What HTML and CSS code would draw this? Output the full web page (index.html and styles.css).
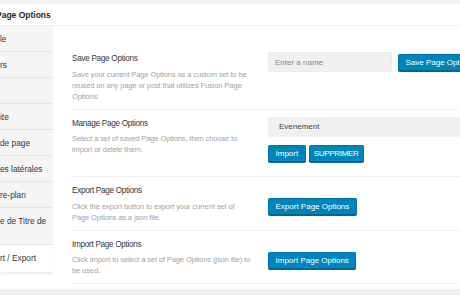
FILE: index.html
```html
<!DOCTYPE html>
<html lang="fr">
<head>
    <meta charset="UTF-8">
    <title>Page Options</title>
    <link rel="stylesheet" href="styles.css">
</head>
<body>

    <div class="postbox">
        <div class="postbox-head">
            <h2>Page Options</h2>
        </div>

        <div class="postbox-inside">
            <ul class="tabs">
                <li class="tab">le</li>
                <li class="tab">rs</li>
                <li class="tab"></li>
                <li class="tab">ite</li>
                <li class="tab">de page</li>
                <li class="tab">es latérales</li>
                <li class="tab">re-plan</li>
                <li class="tab tab-tall">e de Titre de</li>
                <li class="tab tab-active">rt / Export</li>
            </ul>

            <div class="options">
                <div class="option">
                    <div class="option-label">
                        <h3>Save Page Options</h3>
                        <p>Save your current Page Options as a custom set to be reused on any page or post that utilizes Fusion Page Options.</p>
                    </div>
                    <div class="option-field field-inline">
                        <input type="text" class="text-input" placeholder="Enter a name">
                        <button class="btn">Save Page Options</button>
                    </div>
                </div>

                <div class="option">
                    <div class="option-label">
                        <h3>Manage Page Options</h3>
                        <p>Select a set of saved Page Options, then choose to import or delete them.</p>
                    </div>
                    <div class="option-field">
                        <select class="select-input">
                            <option>Evenement</option>
                        </select>
                        <div class="btn-group">
                            <button class="btn">Import</button>
                            <button class="btn btn-caps">SUPPRIMER</button>
                        </div>
                    </div>
                </div>

                <div class="option">
                    <div class="option-label">
                        <h3>Export Page Options</h3>
                        <p>Click the export button to export your current set of Page Options as a json file.</p>
                    </div>
                    <div class="option-field field-center">
                        <button class="btn">Export Page Options</button>
                    </div>
                </div>

                <div class="option">
                    <div class="option-label">
                        <h3>Import Page Options</h3>
                        <p>Click Import to select a set of Page Options (json file) to be used.</p>
                    </div>
                    <div class="option-field field-center">
                        <button class="btn">Import Page Options</button>
                    </div>
                </div>
            </div>
        </div>
    </div>

</body>
</html>
```

FILE: styles.css
```css
body {
    margin: 0;
    padding-top: 4px;
    background-color: #f1f1f1;
    color: #23282d;
    font-family: 'Liberation Sans', Arial, sans-serif;
    overflow: hidden;
}

.postbox {
    background-color: #fff;
}

.postbox-head {
    height: 21px;
    border-bottom: 1px solid #eee;
}

.postbox-head h2 {
    margin: 0 0 0 -4px;
    font-size: 8.5px;
    font-weight: bold;
    line-height: 22px;
    color: #23282d;
}

.postbox-inside {
    display: flex;
    align-items: flex-start;
}

.tabs {
    list-style: none;
    margin: 0;
    padding: 0;
    width: 53px;
    flex-shrink: 0;
    background-color: #f5f5f5;
}

.tab {
    height: 25px;
    line-height: 26px;
    border-bottom: 1px solid #e4e4e4;
    font-size: 8.3px;
    color: #32373c;
    white-space: nowrap;
    overflow: hidden;
}

.tab-tall {
    height: 37px;
    line-height: 12px;
    padding-top: 7px;
    box-sizing: border-box;
}

.tab-active {
    height: 27px;
    line-height: 27px;
    background-color: #fff;
    border-bottom: none;
    box-shadow: 0 2px 2px rgba(0, 0, 0, 0.08);
}

.options {
    flex: 1;
    min-width: 0;
    padding: 19px 0 5px 19px;
}

.option {
    display: grid;
    grid-template-columns: 196px 1fr;
    padding: 7px 0;
    border-bottom: 1px solid #eee;
}

.option-label h3 {
    margin: 0;
    font-size: 8.2px;
    font-weight: normal;
    line-height: 14px;
    letter-spacing: -0.3px;
    color: #32373c;
}

.option-label p {
    width: 181px;
    margin: 2.5px 0 0;
    font-size: 7.6px;
    line-height: 11px;
    letter-spacing: -0.15px;
    color: #a0a4a8;
}

.option-field {
    min-width: 0;
}

.field-inline {
    display: flex;
    align-items: flex-start;
    gap: 6px;
}

.field-center {
    padding-top: 11px;
}

.text-input {
    width: 124px;
    height: 20px;
    flex-shrink: 0;
    box-sizing: border-box;
    margin: 0;
    padding: 0 6px;
    background-color: #f1f0f0;
    border: 1px solid #ebebeb;
    border-radius: 1px;
    font-family: inherit;
    font-size: 8px;
    color: #333;
    outline: none;
}

.text-input::placeholder {
    color: #888;
}

.field-inline .btn {
    margin-top: 1.5px;
    flex-shrink: 0;
}

.select-input {
    display: block;
    width: 100%;
    height: 20px;
    margin: 0;
    padding: 0 11px;
    background-color: #f1f0f0;
    border: none;
    border-radius: 1px;
    font-family: inherit;
    font-size: 8px;
    color: #444;
    appearance: none;
    -webkit-appearance: none;
}

.btn-group {
    display: flex;
    gap: 3px;
    margin: 8px 0 7.5px;
}

.btn {
    height: 17px;
    margin: 0;
    padding: 0 6.5px;
    background-color: #0085ba;
    border: 1px solid #0073aa;
    border-bottom-color: #006799;
    border-radius: 2px;
    box-shadow: 0 1px 0 #006799;
    font-family: inherit;
    font-size: 8px;
    line-height: 15px;
    color: #fff;
    white-space: nowrap;
    cursor: pointer;
}

.btn-caps {
    padding: 0 4px;
    letter-spacing: -0.3px;
}
```
